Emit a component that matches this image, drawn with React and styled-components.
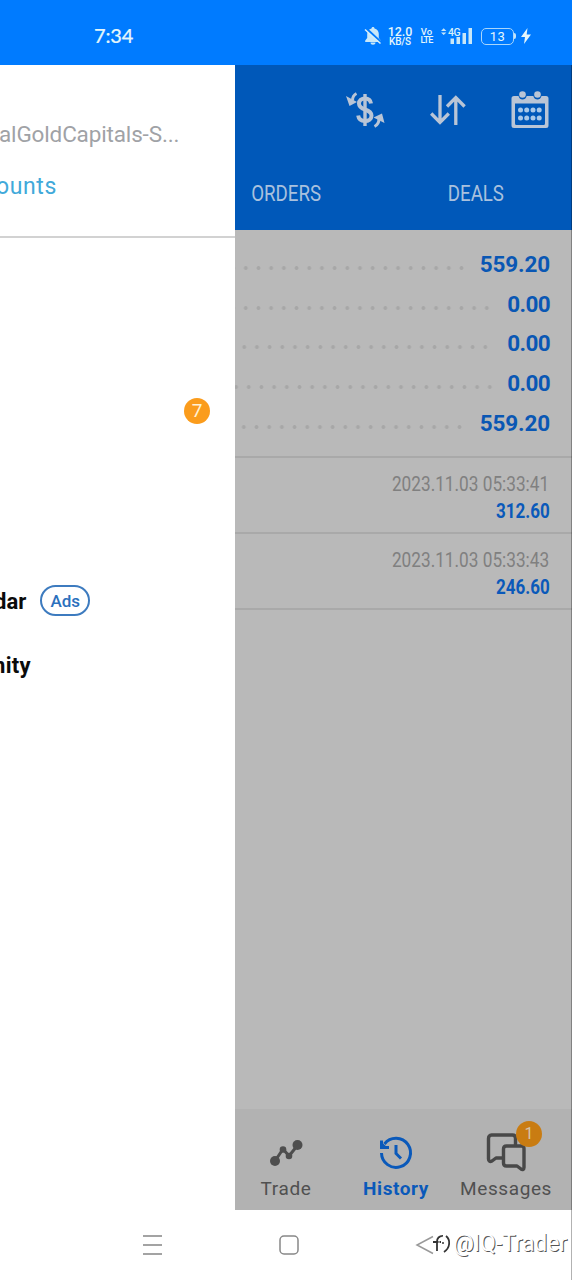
import React from "react";
import styled, { createGlobalStyle } from "styled-components";

const GlobalStyle = createGlobalStyle`
  * { box-sizing: border-box; }
  body { margin: 0; background: #fff; font-family: Roboto, "Liberation Sans", sans-serif; }
  svg { display: block; flex: none; }
`;

const Screen = styled.div`
  position: relative;
  width: 572px;
  height: 1280px;
  display: flex;
  flex-direction: column;
  overflow: hidden;
  background: #fff;
`;

const StatusBar = styled.header`
  height: 65px;
  flex: none;
  display: flex;
  align-items: center;
  justify-content: space-between;
  padding: 7px 40px 0 94px;
  background: #007bff;
  color: #e4f6fb;
`;

const Clock = styled.span`
  font: 500 20px/22px Lato, sans-serif;
  padding-bottom: 2px;
  letter-spacing: -0.2px;
  -webkit-text-stroke: 0.15px currentColor;
`;

const StatusIcons = styled.div`
  display: flex;
  align-items: center;
`;

const Stacked = styled.div`
  display: flex;
  flex-direction: column;
  align-items: center;
  width: ${(p) => p.$width}px;
  margin-left: ${(p) => p.$gap}px;
  font-weight: 500;
  white-space: nowrap;
`;

const StackLine = styled.span`
  font-size: ${(p) => p.$size}px;
  line-height: ${(p) => p.$line}px;
  letter-spacing: ${(p) => p.$track || 0}px;
`;

const Signal = styled.svg`
  margin-left: 8px;
`;

const Battery = styled.div`
  display: flex;
  align-items: center;
  margin-left: 8px;
`;

const BatteryBody = styled.span`
  width: 33px;
  height: 17px;
  border: 1.5px solid #a9d6fb;
  border-radius: 5px;
  font-size: 13px;
  line-height: 15px;
  letter-spacing: 0.5px;
  text-align: center;
`;

const BatteryTip = styled.span`
  width: 2px;
  height: 6px;
  background: #c3e4fb;
  border-radius: 0 2px 2px 0;
`;

const Bolt = styled.svg`
  margin-left: 4px;
`;

const Main = styled.main`
  height: 1145px;
  flex: none;
  display: flex;
`;

const Drawer = styled.aside`
  width: 235px;
  flex: none;
  overflow: hidden;
  white-space: nowrap;
  background: #fff;
`;

const Account = styled.section`
  height: 173px;
  padding-top: 55px;
  border-bottom: 2px solid #d2d2d2;
`;

const Server = styled.div`
  margin-left: -1px;
  color: #a0a2a6;
  font-size: 22.5px;
  line-height: 28px;
  letter-spacing: -0.15px;
`;

const AccountsLink = styled.div`
  margin: 25px 0 0 -4px;
  color: #41a9da;
  font-size: 23px;
  line-height: 28px;
  letter-spacing: 0.6px;
`;

const DrawerMenu = styled.nav`
  display: flex;
  flex-direction: column;
`;

const DrawerRow = styled.div`
  height: 64px;
  display: flex;
  align-items: center;
  color: #0b0b0b;
  font-size: 22px;
  font-weight: 700;
  margin-top: ${(p) => p.$top || 0}px;
  padding-right: 25px;
  justify-content: ${(p) => (p.$end ? "flex-end" : "flex-start")};
`;

const RowLabel = styled.span`
  margin-left: ${(p) => p.$shift}px;
  letter-spacing: ${(p) => p.$track || 0}px;
`;

const Badge = styled.span`
  width: 26px;
  height: 26px;
  border-radius: 50%;
  background: ${(p) => (p.$dim ? "#c97c12" : "#fb9c1c")};
  color: ${(p) => (p.$dim ? "#d5c5ac" : "#fff1d4")};
  font-size: ${(p) => (p.$dim ? 16 : 19)}px;
  font-weight: 400;
  line-height: 26px;
  text-align: center;
`;

const AdsPill = styled.span`
  width: 50px;
  height: 31px;
  margin: -2px 0 0 14px;
  border: 2px solid #3d7bbf;
  border-radius: 16px;
  color: #2b70bd;
  font-size: 17px;
  font-weight: 500;
  line-height: 28px;
  text-align: center;
`;

const Panel = styled.section`
  width: 337px;
  flex: none;
  display: flex;
  flex-direction: column;
  overflow: hidden;
  background: #b9b9b9;
`;

const AppBar = styled.div`
  height: 165px;
  flex: none;
  background: #0058b9;
`;

const Actions = styled.div`
  height: 90px;
  display: flex;
  align-items: center;
  justify-content: flex-end;
  gap: 45px;
  padding-right: 23px;
`;

const Tabs = styled.div`
  display: flex;
  height: 75px;
  margin-left: -44px;
`;

const Tab = styled.div`
  width: 190px;
  flex: none;
  display: flex;
  justify-content: center;
  align-items: center;
  padding-top: 1px;
  color: #a9c1de;
  font-size: 22.5px;
  white-space: nowrap;
`;

const Condensed = styled.span`
  display: inline-block;
  transform: scaleX(${(p) => p.$scale});
  transform-origin: ${(p) => p.$origin || "center"};
`;

const Summary = styled.section`
  height: 228px;
  flex: none;
  padding: 14px 22px 0 0;
  border-bottom: 2px solid #a9a9a9;
`;

const SummaryRow = styled.div`
  display: flex;
  align-items: center;
  height: 39.75px;
`;

const Leader = styled.span`
  flex: 1;
  height: 4px;
  margin: 8px ${(p) => p.$gap}px 0 0;
  background: radial-gradient(circle at center, #a7a7a7 1.5px, transparent 2.3px) right center / 12.7px 4px repeat-x;
`;

const Amount = styled.span`
  color: #0a57b4;
  font-size: 22.5px;
  font-weight: 700;
  line-height: 30px;
  letter-spacing: ${(p) => p.$track}px;
`;

const Deal = styled.article`
  height: 76px;
  flex: none;
  display: flex;
  flex-direction: column;
  align-items: flex-end;
  padding: 13px 22.5px 0 0;
  border-bottom: 2px solid #a9a9a9;
  white-space: nowrap;
`;

const DealTime = styled.span`
  color: #808080;
  font-size: 20.5px;
  line-height: 27px;
`;

const DealAmount = styled.span`
  color: #0a59ba;
  font-size: 20.5px;
  font-weight: 700;
  line-height: 27px;
`;

const BottomNav = styled.nav`
  height: 101px;
  margin-top: auto;
  padding: 23px 0 0;
  display: flex;
  background: #b2b2b2;
`;

const NavItems = styled.div`
  display: flex;
  margin-left: -4px;
`;

const NavItem = styled.div`
  position: relative;
  width: 110px;
  display: flex;
  flex-direction: column;
  align-items: center;
  gap: 2px;
  color: ${(p) => (p.$active ? "#0a59ba" : "#505050")};
  font-size: 19px;
  font-weight: ${(p) => (p.$active ? 700 : 400)};
  line-height: 29px;
  letter-spacing: ${(p) => p.$track}px;
`;

const NavBadge = styled(Badge)`
  position: absolute;
  top: -11px;
  right: 19px;
  letter-spacing: 0;
`;

const SystemNav = styled.footer`
  height: 70px;
  display: flex;
  align-items: center;
  gap: 116px;
  padding-left: 142px;
`;

const Watermark = styled.div`
  position: absolute;
  right: 5px;
  bottom: 21px;
  display: flex;
  align-items: center;
  gap: 1px;
  color: #fff;
  font-size: 23px;
  line-height: 30px;
  letter-spacing: -0.1px;
  white-space: nowrap;
  text-shadow: 1px 1px 0.5px #555;
`;

const Edge = styled.div`
  position: absolute;
  top: 65px;
  right: 0;
  bottom: 0;
  width: 1px;
  background: rgba(0, 0, 0, 0.3);
`;

const BellOff = () => (
  <svg width="18" height="20" viewBox="0 0 18 20">
    <path d="M9 1c1 0 1.500.7 1.500 1.500 2.800.7 4.300 3 4.300 5.500v4l2 2.500V16H1.200v-1.500l2-2.500V8c0-2.500 1.500-4.800 4.300-5.500C7.500 1.700 8 1 9 1zM6.500 16.500h5c0 1.300-1.100 2.300-2.500 2.300s-2.500-1-2.500-2.300z" fill="#c8e7f8" />
    <path d="M2 2.500l15 14" stroke="#007bff" strokeWidth="2.500" />
    <path d="M1 3.500l15.500 14" stroke="#d8f0fa" strokeWidth="1.500" />
  </svg>
);

const SignalBars = () => (
  <Signal width="32" height="20" viewBox="0 0 32 20">
    <path d="M0 6.500L3 3l3 3.500zM0 8.500h6L3 12z" transform="scale(.9 .75)" fill="#c8e7f8" />
    <text x="7" y="10" fill="#d8f0fa" fontSize="10.500" fontWeight="500" letterSpacing="-.5" fontFamily="Roboto, sans-serif">4G</text>
    <path d="M9.500 12.500h3.500V18H9.500zM15.500 11h3.500v7h-3.500zM21.500 7h3.500v11h-3.500zM27.500 2H31v16h-3.500z" fill="#c8e7f8" />
  </Signal>
);

const BoltIcon = () => (
  <Bolt width="12" height="18" viewBox="0 0 12 18">
    <path d="M7.500 1L1 10h4l-1 7 7-9.500H6.700z" fill="#e4f6fb" />
  </Bolt>
);

const DollarIcon = () => (
  <svg width="40" height="38" viewBox="0 0 40 38" fill="none" stroke="#b9c5d6">
    <path d="M20 3v32" strokeWidth="3.400" />
    <path d="M26 12.500c-.5-3.500-2.500-5-6-5s-6 2-6 5 2.500 4.800 6 6 6.500 3 6.500 6.200-3 5.300-6.500 5.300-6.300-1.800-6.800-5.500" strokeWidth="4" />
    <path d="M11.500 2.500C8.500 4 7.500 6 7.500 9.500M29.500 35.500c3-1.500 4.500-4 4.500-8" strokeWidth="3" />
    <path d="M1 5l3.500 10 7.500-4zM28.500 26.500l8.500-4 2.500 9.500z" fill="#b9c5d6" stroke="none" />
  </svg>
);

const SortIcon = () => (
  <svg width="36" height="32" viewBox="0 0 36 32" fill="none" stroke="#b9c5d6" strokeWidth="3.300">
    <path d="M10 1v28M1.200 19.500L10 28.500l8.800-9M25.800 31V3M17 12.500l8.800-9 8.800 9" />
  </svg>
);

const CalendarIcon = () => (
  <svg width="38" height="38" viewBox="0 0 38 38">
    <path fill="#b9c5d6" fillRule="evenodd" d="M3 5h4.500c.8 2.500 2 3.500 4 3.500S15 7.500 15.700 5h6.600c.7 2.500 2.200 3.500 4.200 3.500s3.200-1 4-3.500H35a2.500 2.500 0 0 1 2.500 2.500v27A2.500 2.500 0 0 1 35 37H3a2.500 2.500 0 0 1-2.500-2.500v-27A2.500 2.500 0 0 1 3 5zM4 12.500V32.500a1.500 1.500 0 0 0 1.500 1.500h27a1.500 1.500 0 0 0 1.500-1.500V12.500z" />
    <circle cx="11.500" cy="3.500" r="3.300" fill="#b9c5d6" />
    <circle cx="26.500" cy="3.500" r="3.300" fill="#b9c5d6" />
    {[19, 27].map((y) => [9.5, 15.7, 22, 28.2].map((x) => <circle key={`${x}-${y}`} cx={x} cy={y} r="2.500" fill="#a9c8e8" />))}
  </svg>
);

const TradeIcon = () => (
  <svg width="36" height="40" viewBox="0 0 36 40">
    <path d="M7 29l8-12 6 7 8-10" fill="none" stroke="#4e4e4e" strokeWidth="3" strokeLinejoin="round" />
    <g fill="#4e4e4e"><circle cx="7" cy="29" r="5" /><circle cx="15" cy="17.500" r="3.300" /><circle cx="21" cy="24" r="3.300" /><circle cx="29.500" cy="13" r="5" /></g>
  </svg>
);

const HistoryIcon = () => (
  <svg width="36" height="40" viewBox="0 0 36 40" fill="none" stroke="#0a59ba" strokeWidth="3">
    <path d="M3.500 21A14.500 14.500 0 1 0 6.500 12" />
    <path d="M3.500 8.500v7h7.500" />
    <path d="M3 9.500V16.500h7.500z" fill="#0a59ba" stroke="none" />
    <path d="M18 13v8.500l5 5" />
  </svg>
);

const MessagesIcon = () => (
  <svg width="40" height="40" viewBox="0 0 40 40" fill="none" stroke="#484848" strokeWidth="3.400" strokeLinejoin="round">
    <path d="M17 26h-7l-4 3c-2 1-3.500.5-3.500-2V6.500C2.500 4.500 3.500 3 5.500 3h21c2 0 3 1.500 3 3.500V13" />
    <path d="M20.500 14h15c1.500 0 2.500 1 2.500 2.500V35.500c0 2-1.500 2.500-3 1.500L31 34H20.500c-2 0-3-1-3-3V17c0-2 1-3 3-3z" />
  </svg>
);

const MarkLogo = () => (
  <svg width="20" height="24" viewBox="0 0 20 24" fill="none">
    <path d="M11 4C7 4 5 6 5 10v9M1 10h8M14 4c5 4 4 12-2 16" stroke="#333" strokeWidth="1.800" />
    <path d="M12 5C8 5 7 7 7 11v8M13 6c4 4 2 9-1 12" stroke="#fff" strokeWidth="1" />
    <circle cx="11" cy="11" r="1" fill="#333" />
  </svg>
);

const summary = [
  { value: "559.20", gap: 12, track: -0.15 },
  { value: "0.00", gap: 14, track: -0.6 },
  { value: "0.00", gap: 15.5, track: -0.6 },
  { value: "0.00", gap: 11, track: -0.6 },
  { value: "559.20", gap: 14, track: -0.15 },
];

const deals = [
  { time: "2023.11.03 05:33:41", amount: "312.60" },
  { time: "2023.11.03 05:33:43", amount: "246.60" },
];

export default function App() {
  return (
    <>
      <GlobalStyle />
      <Screen>
        <StatusBar>
          <Clock>7:34</Clock>
          <StatusIcons>
            <BellOff />
            <Stacked $width={24} $gap={6}>
              <StackLine $size={12.5} $line={11} $track={-0.1}>12.0</StackLine>
              <StackLine $size={10} $line={10} $track={-0.2}>KB/S</StackLine>
            </Stacked>
            <Stacked $width={13} $gap={8}>
              <StackLine $size={9.5} $line={9.5}>Vo</StackLine>
              <StackLine $size={9} $line={9} $track={-0.8}>LTE</StackLine>
            </Stacked>
            <SignalBars />
            <Battery>
              <BatteryBody>13</BatteryBody>
              <BatteryTip />
            </Battery>
            <BoltIcon />
          </StatusIcons>
        </StatusBar>

        <Main>
          <Drawer>
            <Account>
              <Server>alGoldCapitals-S...</Server>
              <AccountsLink>ounts</AccountsLink>
            </Account>
            <DrawerMenu>
              <DrawerRow $top={141} $end><Badge>7</Badge></DrawerRow>
              <DrawerRow $top={126}>
                <RowLabel $shift={-6}>dar</RowLabel>
                <AdsPill>Ads</AdsPill>
              </DrawerRow>
              <DrawerRow><RowLabel $shift={-7} $track={0.3}>nity</RowLabel></DrawerRow>
            </DrawerMenu>
          </Drawer>

          <Panel>
            <AppBar>
              <Actions>
                <DollarIcon />
                <SortIcon />
                <CalendarIcon />
              </Actions>
              <Tabs>
                <Tab><Condensed $scale={0.83}>ORDERS</Condensed></Tab>
                <Tab><Condensed $scale={0.83}>DEALS</Condensed></Tab>
              </Tabs>
            </AppBar>
            <Summary>
              {summary.map((row, i) => (
                <SummaryRow key={i}>
                  <Leader $gap={row.gap} />
                  <Amount $track={row.track}>{row.value}</Amount>
                </SummaryRow>
              ))}
            </Summary>
            {deals.map((deal) => (
              <Deal key={deal.time}>
                <DealTime><Condensed $scale={0.84} $origin="right">{deal.time}</Condensed></DealTime>
                <DealAmount><Condensed $scale={0.83} $origin="right">{deal.amount}</Condensed></DealAmount>
              </Deal>
            ))}
            <BottomNav>
              <NavItems>
                <NavItem $track={0.65}><TradeIcon />Trade</NavItem>
                <NavItem $active $track={0.6}><HistoryIcon />History</NavItem>
                <NavItem $track={0.6}><MessagesIcon /><NavBadge $dim>1</NavBadge>Messages</NavItem>
              </NavItems>
            </BottomNav>
          </Panel>
        </Main>

        <SystemNav>
          <svg width="21" height="22" viewBox="0 0 21 22" stroke="#858585" strokeWidth="1.500"><path d="M1 2h19M1 11h19M1 20h19" /></svg>
          <svg width="20" height="20" viewBox="0 0 20 20" fill="none" stroke="#888" strokeWidth="1.500"><rect x="1" y="1" width="18" height="18" rx="4" /></svg>
          <svg width="20" height="20" viewBox="0 0 20 20" fill="none" stroke="#999" strokeWidth="1.500"><path d="M18 1.500L2 10l16 8.500" /></svg>
        </SystemNav>
        <Watermark><MarkLogo />@IQ-Trader</Watermark>
        <Edge />
      </Screen>
    </>
  );
}
